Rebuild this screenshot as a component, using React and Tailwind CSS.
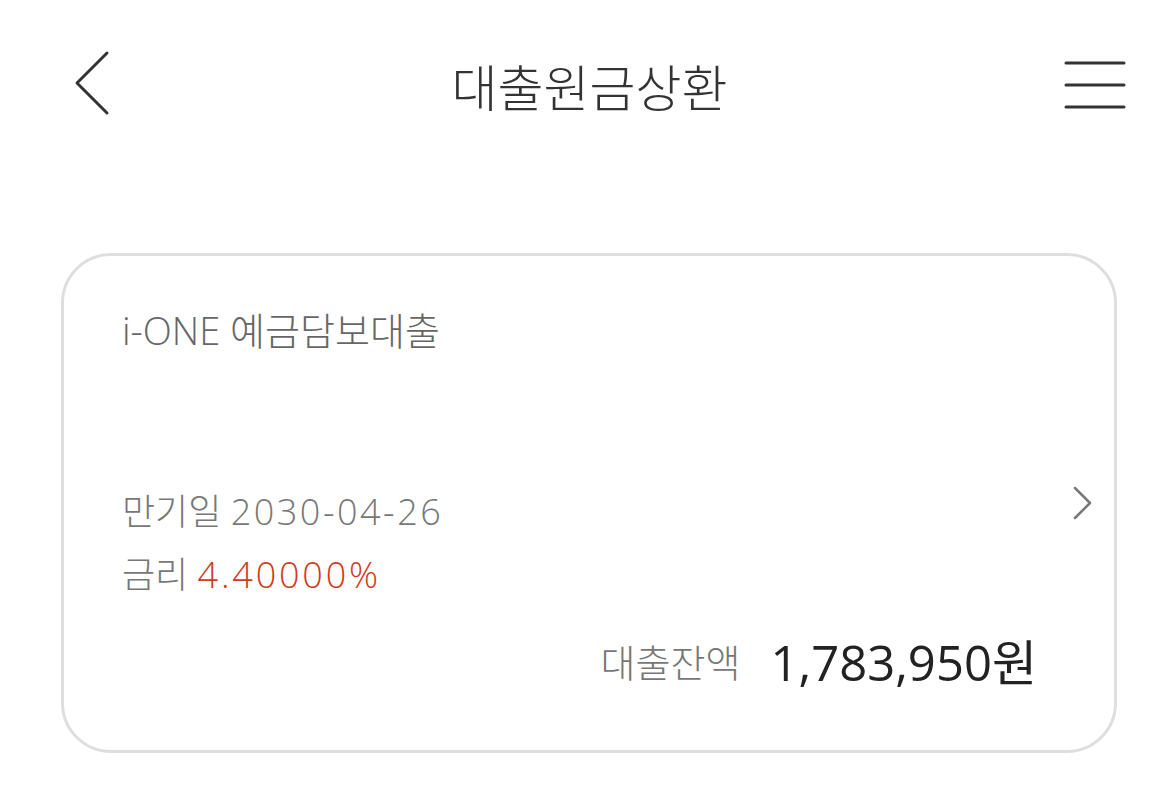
import React from 'react';

const font = { fontFamily: '"Open Sans", "Noto Sans CJK KR", "Noto Sans", sans-serif' };

const BackIcon = () => (
  <svg width="38" height="66" viewBox="0 0 38 66" fill="none">
    <path d="M34 3 L4 33 L34 63" stroke="#333" strokeWidth="3" strokeLinecap="round" strokeLinejoin="round" />
  </svg>
);

const MenuIcon = () => (
  <svg width="62" height="50" viewBox="0 0 62 50" fill="none">
    <path d="M2 3 H60 M2 25 H60 M2 47 H60" stroke="#333" strokeWidth="3" strokeLinecap="round" />
  </svg>
);

const ChevronRight = () => (
  <svg width="22" height="36" viewBox="0 0 22 36" fill="none">
    <path d="M3 3 L18 18 L3 33" stroke="#777" strokeWidth="2.5" strokeLinecap="round" strokeLinejoin="round" />
  </svg>
);

export default function App() {
  return (
    <div className="min-h-screen w-[1150px] bg-white font-light" style={font}>
      {/* Header */}
      <div className="flex h-[176px] items-center pl-[73px] pr-[24px]">
        <div className="mb-[10px] flex w-[38px] items-center"><BackIcon /></div>
        <h1 className="flex-1 text-center text-[50px] leading-[60px] text-[#333] pl-[4px] font-light">대출원금상환</h1>
        <div className="mb-[6px] flex w-[62px] items-center"><MenuIcon /></div>
      </div>

      {/* Loan card */}
      <div className="ml-[61px] mt-[77px] flex h-[500px] w-[1056px] items-center rounded-[50px] border-[3px] border-[#dedede]">
        <div className="flex h-full flex-1 flex-col pl-[58px] pt-[50px]">
          <div className="text-[38px] leading-[48px] text-[#666]">i-ONE 예금담보대출</div>
          <div className="mt-[42px] h-[48px]" />
          <div className="mt-[44px] text-[36px] leading-[48px] text-[#777]">
            만기일 <span className="tracking-[2.5px]">2030-04-26</span>
          </div>
          <div className="mt-[15px] text-[36px] leading-[48px] text-[#777]">
            금리 <span className="tracking-[2.8px] text-[#d2381c]">4.40000%</span>
          </div>
          <div className="mt-[33px] flex items-center justify-end gap-[30px]">
            <span className="text-[38px] leading-[60px] text-[#777]">대출잔액</span>
            <span className="text-[49px] leading-[60px] text-[#222] font-normal">1,783,950원</span>
          </div>
        </div>
        <div className="flex w-[77px] items-center pl-[35px]"><ChevronRight /></div>
      </div>
    </div>
  );
}
